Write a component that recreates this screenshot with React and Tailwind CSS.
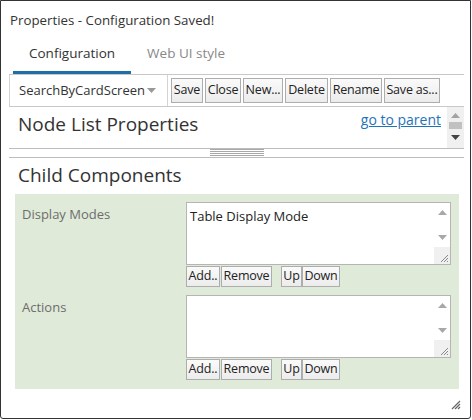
import React from "react";

const font = { fontFamily: '"Open Sans", "Noto Sans", Arial, sans-serif' };

const Btn = ({ children, w }) => (
  <button
    className={`${w} h-[25px] shrink-0 whitespace-nowrap text-center border border-[#adadad] bg-gradient-to-b from-[#fafafa] to-[#ececec] text-[12.5px] leading-none text-[#222] tracking-[-0.2px]`}
  >
    {children}
  </button>
);

const SmallBtn = ({ children, w }) => (
  <button
    className={`${w} h-[21px] shrink-0 whitespace-nowrap text-center border border-[#adadad] bg-gradient-to-b from-[#fafafa] to-[#ececec] text-[12.5px] leading-none text-[#222] tracking-[-0.2px]`}
  >
    {children}
  </button>
);

const Arrow = ({ up, color }) => (
  <svg width="9" height="5" viewBox="0 0 9 5">
    {up ? <path d="M0 5 L4.5 0 L9 5 Z" fill={color} /> : <path d="M0 0 L9 0 L4.5 5 Z" fill={color} />}
  </svg>
);

const Grip = () => (
  <svg width="9" height="9" viewBox="0 0 9 9">
    <path d="M8 1 L1 8 M8 4 L4 8 M8 7 L7 8" stroke="#888" strokeWidth="1" />
  </svg>
);

// listbox that looks like a native textarea with its scrollbar
const ListBox = ({ items }) => (
  <div className="w-[265px] h-[63px] border border-[#b5b5b5] bg-white flex">
    <div className="flex-1 pl-[3px] pt-[4px] text-[13px] leading-[18px] text-[#222]">
      {items.map((t) => (
        <div key={t}>{t}</div>
      ))}
    </div>
    <div className="w-[16px] flex flex-col">
      <div className="h-[22px] pt-[7px] flex justify-center">
        <Arrow up color="#a8a8a8" />
      </div>
      <div className="h-[22px] pt-[10px] flex justify-center">
        <Arrow color="#a8a8a8" />
      </div>
      <div className="flex-1 bg-[#f0f0f0] flex items-end justify-end pr-[1px] pb-[1px]">
        <Grip />
      </div>
    </div>
  </div>
);

const Field = ({ label, items }) => (
  <div className="flex">
    <div className="w-[171px] pl-[7px] pt-[3px] text-[13px] text-[#6d6d6d]">{label}</div>
    <div className="flex flex-col">
      <ListBox items={items} />
      <div className="flex mt-[1px]">
        <SmallBtn w="w-[34px]">Add..</SmallBtn>
        <div className="w-[1px]" />
        <SmallBtn w="w-[51px]">Remove</SmallBtn>
        <div className="w-[9px]" />
        <SmallBtn w="w-[21px]">Up</SmallBtn>
        <SmallBtn w="w-[38px]">Down</SmallBtn>
      </div>
    </div>
  </div>
);

export default function App() {
  return (
    <div style={font} className="w-[471px] h-[419px] border border-[#333] rounded-b-[3px] bg-white relative overflow-hidden text-[#333]">
      <div className="pl-[8px] pr-[6px]">
        <div className="h-[35px] pt-[9px] pl-[1px] text-[13.3px] leading-[20px] text-[#333]">Properties - Configuration Saved!</div>

        <div className="flex h-[39px] pl-[4px] border-b border-[#c8c8c8]">
          <div className="px-[16px] flex items-center border-b-[3px] border-[#1f6ea6] pb-[1px] text-[13.5px] text-[#333]">Configuration</div>
          <div className="px-[16px] flex items-center pb-[4px] text-[13.5px] text-[#888]">Web UI style</div>
        </div>

        <div className="flex items-center h-[32px] border-b border-[#c8c8c8] gap-[2px]">
          <div className="w-[159px] mr-[1px] h-full border-l border-r border-[#d4d4d4] flex items-center pl-[9px] pr-[11px] text-[13px] text-[#333]">
            <span className="flex-1">SearchByCardScreen</span>
            <Arrow color="#999" />
          </div>
          <Btn w="w-[32px]">Save</Btn>
          <Btn w="w-[36px]">Close</Btn>
          <Btn w="w-[40px]">New...</Btn>
          <Btn w="w-[43px]">Delete</Btn>
          <Btn w="w-[52px]">Rename</Btn>
          <Btn w="w-[56px]">Save as...</Btn>
        </div>

        <div className="flex h-[42px] border-b border-[#bdbdbd]">
          <div className="flex-1 pl-[9px] pt-[4px] text-[19px] leading-[26px] text-[#333]">Node List Properties</div>
          <a className="pt-[3px] pr-[6px] text-[14px] leading-[20px] text-[#1f73b7] underline">go to parent</a>
          <div className="w-[17px] bg-[#f0f0f0] flex flex-col items-center pt-[6px]">
            <Arrow up color="#a3a3a3" />
            <div className="mt-[4px] w-[13px] h-[7px] bg-[#c1c1c1]" />
            <div className="mt-[6px]">
              <Arrow color="#444" />
            </div>
          </div>
        </div>

        <div className="h-[9px] border-b border-[#bdbdbd] flex justify-center">
          <div className="w-[54px] flex flex-col gap-[1px]">
            <div className="h-[1px] bg-[#a8a8a8]" />
            <div className="h-[1px] bg-[#a8a8a8]" />
            <div className="h-[1px] bg-[#a8a8a8]" />
            <div className="h-[1px] bg-[#a8a8a8]" />
          </div>
        </div>

        <div className="h-[36px] pl-[9px] pt-[4px] text-[19px] leading-[26px] text-[#333]">Child Components</div>

        <div className="ml-[6px] mr-[5px] bg-[#dfead8] pt-[8px] pb-[9px] flex flex-col gap-[8px]">
          <Field label="Display Modes" items={["Table Display Mode"]} />
          <Field label="Actions" items={[]} />
        </div>
      </div>

      <div className="absolute right-[9px] bottom-[8px]">
        <svg width="10" height="10" viewBox="0 0 10 10">
          <path d="M9 1 L1 9 M9 4 L4 9 M9 7 L7 9" stroke="#666" strokeWidth="1.2" />
        </svg>
      </div>
    </div>
  );
}
